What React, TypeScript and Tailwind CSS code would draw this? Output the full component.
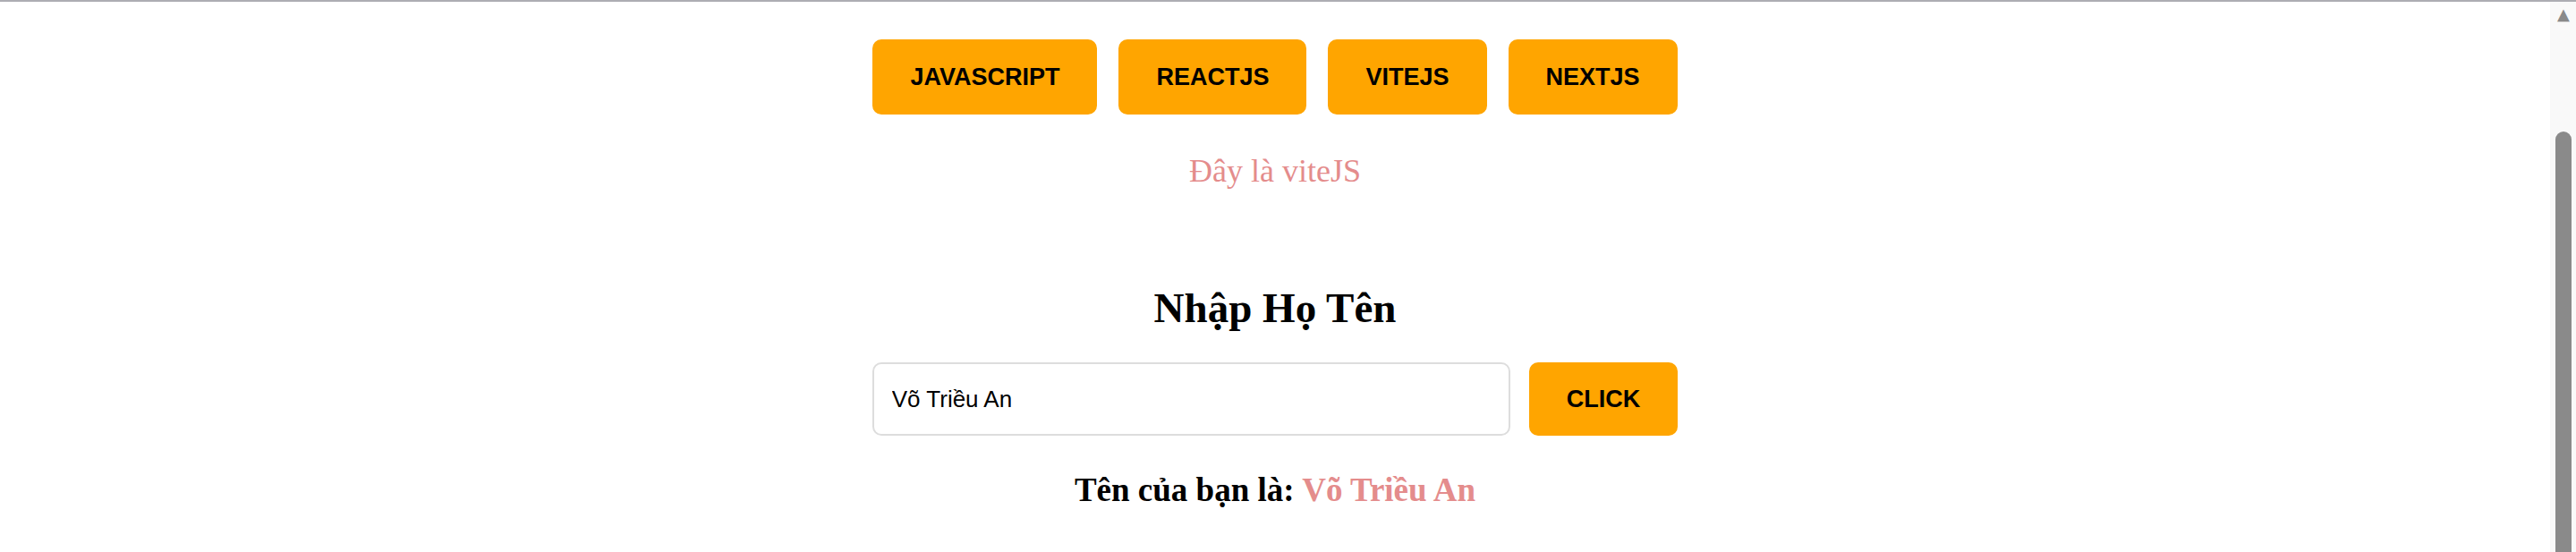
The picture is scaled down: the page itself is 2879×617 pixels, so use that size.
import React from 'react';

const tabs = ['JAVASCRIPT', 'REACTJS', 'VITEJS', 'NEXTJS'];

const btn =
  "h-[84px] px-[42px] flex items-center justify-center rounded-[10px] bg-[#ffa500] text-black font-bold text-[27px] font-['Liberation_Sans',Arial,sans-serif]";

const App = () => {
  return (
    <div className="w-full h-[617px] flex flex-col bg-white overflow-hidden">
      {/* top edge */}
      <div className="h-[2px] w-full bg-[#adadb3]" />

      <div className="flex flex-1 min-h-0">
        {/* Page */}
        <main className="flex-1 flex flex-col items-center pt-[42px]">
          <div className="flex gap-[24px]">
            {tabs.map((t) => (
              <button key={t} className={btn}>
                {t}
              </button>
            ))}
          </div>

          <p className="mt-[43px] text-[36px] leading-[41px] text-[#e48c8c] font-['Liberation_Serif','Times_New_Roman',serif]">
            Đây là viteJS
          </p>

          <h2 className="mt-[105px] text-[47px] leading-[54px] font-bold text-black font-['Liberation_Serif','Times_New_Roman',serif]">
            Nhập Họ Tên
          </h2>

          <div className="mt-[34px] flex gap-[21px]">
            <input
              value="Võ Triều An"
              readOnly
              className="w-[713px] h-[82px] px-[20px] rounded-[10px] border-2 border-[#dddddd] text-[26px] text-black outline-none font-['Liberation_Sans',Arial,sans-serif]"
            />
            <button className="h-[82px] px-[42px] flex items-center justify-center rounded-[10px] bg-[#ffa500] text-black font-bold text-[27px] font-['Liberation_Sans',Arial,sans-serif]">
              CLICK
            </button>
          </div>

          <p className="mt-[40px] text-[37px] leading-[41px] font-bold text-black font-['Liberation_Serif','Times_New_Roman',serif]">
            Tên của bạn là: <span className="text-[#e48c8c]">Võ Triều An</span>
          </p>
        </main>

        {/* Scrollbar */}
        <div className="w-[29px] shrink-0 bg-[#f9f9f9] flex flex-col pl-[6px] pr-[5px]">
          <div className="mt-[6px] h-[16px] w-[18px] shrink-0 flex items-center justify-center text-[18px] leading-none text-[#8a8a8a] font-['DejaVu_Sans',sans-serif]">
            ▲
          </div>
          <div className="mt-[123px] w-[18px] flex-1 rounded-t-[9px] bg-[#8a8a8a]" />
        </div>
      </div>
    </div>
  );
};

export default App;
